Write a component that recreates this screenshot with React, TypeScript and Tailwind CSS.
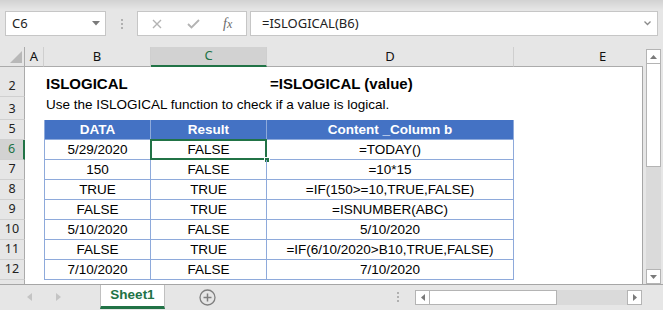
import React from "react";

const cellFont = "font-['Liberation_Sans',Arial,sans-serif] text-[13.5px] text-black";
const ui = "font-['Segoe_UI','Noto_Sans',sans-serif]";

const rows = [
  { n: 6, data: "5/29/2020", result: "FALSE", content: "=TODAY()" },
  { n: 7, data: "150", result: "FALSE", content: "=10*15" },
  { n: 8, data: "TRUE", result: "TRUE", content: "=IF(150>=10,TRUE,FALSE)" },
  { n: 9, data: "FALSE", result: "TRUE", content: "=ISNUMBER(ABC)" },
  { n: 10, data: "5/10/2020", result: "FALSE", content: "5/10/2020" },
  { n: 11, data: "FALSE", result: "TRUE", content: "=IF(6/10/2020>B10,TRUE,FALSE)" },
  { n: 12, data: "7/10/2020", result: "FALSE", content: "7/10/2020" },
];

function RowHead({ n, active, className }: { n?: number; active?: boolean; className: string }) {
  return (
    <div
      className={`${className} w-[25px] shrink-0 flex items-end justify-center pb-[3px] border-b border-[#d0d0d0] text-[12.5px] leading-[14px] ${ui} ${
        active
          ? "bg-[#d2d2d2] text-[#217346] border-r-2 border-r-[#217346]"
          : "bg-[#e6e6e6] text-[#222] border-r border-r-[#ababab]"
      }`}
    >
      {n}
    </div>
  );
}

function ColHead({ label, w, active }: { label: string; w: string; active?: boolean }) {
  return (
    <div
      className={`${w} shrink-0 h-full flex items-center justify-center text-[13px] ${ui} border-r border-[#cfcfcf] ${
        active ? "bg-[#d2d2d2] text-[#217346] border-b-2 border-b-[#217346]" : "text-[#111] border-b border-b-[#ababab]"
      }`}
    >
      {label}
    </div>
  );
}

export default function App() {
  return (
    <div className="w-[663px] h-[310px] overflow-hidden flex flex-col bg-[#e6e6e6]">
      {/* formula bar */}
      <div className="h-[47px] shrink-0 flex pt-[11px] pl-[5px] bg-[linear-gradient(#d2d2d2,#e6e6e6_10px)]">
        <div className="w-[101px] h-[25px] bg-white border border-[#c6c6c6] flex items-center justify-between pl-[6px] pr-[5px]">
          <span className={`${ui} text-[13px] text-[#222]`}>C6</span>
          <svg width="8" height="5" viewBox="0 0 8 5">
            <path d="M0 0H8L4 4.5Z" fill="#7a7a7a" />
          </svg>
        </div>
        <div className="w-[31px] h-[25px] flex flex-col items-center justify-center gap-[2px]">
          <div className="w-[2px] h-[2px] bg-[#b0b0b0]" />
          <div className="w-[2px] h-[2px] bg-[#b0b0b0]" />
          <div className="w-[2px] h-[2px] bg-[#b0b0b0]" />
        </div>
        <div className="w-[110px] h-[25px] bg-white border border-[#c6c6c6] flex items-center">
          <svg width="10" height="10" viewBox="0 0 10 10" className="ml-[14px]">
            <path d="M1 1L9 9M9 1L1 9" stroke="#b3b3b3" strokeWidth="1.4" />
          </svg>
          <svg width="13" height="10" viewBox="0 0 13 10" className="ml-[25px]">
            <path d="M1 5L4.5 8.5L12 1" stroke="#b3b3b3" strokeWidth="1.8" fill="none" />
          </svg>
          <span className="ml-[23px] font-['Liberation_Serif',serif] italic text-[14px] text-[#6a6a6a] leading-none">
            f<span className="text-[12px]">x</span>
          </span>
        </div>
        <div className="ml-[3px] w-[408px] h-[25px] bg-white border border-[#c6c6c6] flex items-center justify-between pl-[11px] pr-[6px]">
          <span className={`${ui} text-[13px] text-[#222]`}>=ISLOGICAL(B6)</span>
          <svg width="7" height="5" viewBox="0 0 7 5">
            <path d="M0.5 0.5L3.5 3.5L6.5 0.5" stroke="#8a8a8a" strokeWidth="1.3" fill="none" />
          </svg>
        </div>
      </div>

      {/* sheet */}
      <div className="flex flex-1 min-h-0">
        <div className="w-[643px] shrink-0 flex flex-col">
          {/* column headers */}
          <div className="h-[20px] shrink-0 flex">
            <div className="w-[25px] shrink-0 h-full flex items-end justify-end pr-[2px] pb-[3px] border-r border-b border-[#ababab]">
              <svg width="12" height="12" viewBox="0 0 12 12">
                <path d="M12 0V12H0Z" fill="#b8b8b8" />
              </svg>
            </div>
            <ColHead label="A" w="w-[19px]" />
            <ColHead label="B" w="w-[107px]" />
            <ColHead label="C" w="w-[116px]" active />
            <ColHead label="D" w="w-[247px]" />
            <div className="flex-1 h-full flex items-center pl-[85px] text-[13px] text-[#111] border-b border-[#ababab] font-['Segoe_UI','Noto_Sans',sans-serif]">
              E
            </div>
          </div>

          {/* rows */}
          <div className="flex-1 min-h-0 flex flex-col bg-white border-r border-[#a6a6a6]">
            <div className="h-[30px] flex">
              <RowHead n={2} className="h-[30px]" />
              <div className="w-[19px]" />
              <div className="w-[223px] flex items-end pb-[2px] pl-[2px] font-bold text-[15px] font-['Liberation_Sans',Arial,sans-serif]">
                ISLOGICAL
              </div>
              <div className="flex-1 flex items-end pb-[2px] pl-[3px] font-bold text-[15px] font-['Liberation_Sans',Arial,sans-serif]">
                =ISLOGICAL (value)
              </div>
            </div>
            <div className="h-[23px] flex">
              <RowHead n={3} className="h-[23px]" />
              <div className="w-[19px]" />
              <div className={`flex-1 flex items-end pb-[5px] pl-[2px] ${cellFont}`}>
                Use the ISLOGICAL function to check if a value is logical.
              </div>
            </div>

            {/* table header */}
            <div className="h-[20px] flex">
              <RowHead n={5} className="h-[20px]" />
              <div className="w-[19px]" />
              {["DATA", "Result", "Content _Column b"].map((t, i) => (
                <div
                  key={t}
                  className={`${["w-[107px] border-l", "w-[116px]", "w-[247px]"][i]} bg-[#4472c4] border-r border-b border-[#8eaadb] flex items-center justify-center pt-px font-bold text-white font-['Liberation_Sans',Arial,sans-serif] text-[13.5px]`}
                >
                  {t}
                </div>
              ))}
            </div>

            {rows.map((r) => (
              <div key={r.n} className="h-[20px] flex">
                <RowHead n={r.n} active={r.n === 6} className="h-[20px]" />
                <div className="w-[19px]" />
                <div className={`w-[107px] border-l border-r border-b border-[#8eaadb] flex items-center justify-center pt-px ${cellFont}`}>
                  {r.data}
                </div>
                <div className={`relative w-[116px] border-r border-b border-[#8eaadb] flex items-center justify-center pt-px ${cellFont}`}>
                  {r.result}
                  {r.n === 6 && (
                    <>
                      <div className="absolute left-[-1px] top-[-1px] right-[-1px] bottom-[-1px] border-2 border-[#217346]" />
                      <div className="absolute right-[-4px] bottom-[-4px] w-[6px] h-[6px] bg-[#217346] border border-white" />
                    </>
                  )}
                </div>
                <div className={`w-[247px] border-r border-b border-[#8eaadb] flex items-center justify-center pt-px ${cellFont}`}>
                  {r.content}
                </div>
              </div>
            ))}
            <div className="flex-1 flex">
              <div className="w-[25px] bg-[#e6e6e6] border-r border-[#ababab]" />
            </div>
          </div>
        </div>

        {/* vertical scrollbar */}
        <div className="flex-1 pl-[3px] pt-[2px]">
          <div className="w-[15px] h-full flex flex-col bg-[#dadada]">
            <div className="h-[15px] shrink-0 bg-white border border-[#b4b4b4] flex items-center justify-center">
              <svg width="7" height="4" viewBox="0 0 7 4">
                <path d="M0 4H7L3.5 0Z" fill="#7a7a7a" />
              </svg>
            </div>
            <div className="h-[103px] shrink-0 bg-white border border-[#b4b4b4] border-t-0" />
            <div className="flex-1" />
            <div className="h-[15px] shrink-0 bg-white border border-[#b4b4b4] flex items-center justify-center">
              <svg width="7" height="4" viewBox="0 0 7 4">
                <path d="M0 0H7L3.5 4Z" fill="#7a7a7a" />
              </svg>
            </div>
          </div>
        </div>
      </div>

      {/* sheet tabs */}
      <div className="h-[26px] shrink-0 flex items-start border-t border-[#a6a6a6]">
        <div className="w-[100px] h-[24px] flex items-center">
          <svg width="5" height="8" viewBox="0 0 5 8" className="ml-[27px]">
            <path d="M5 0V8L0 4Z" fill="#c4c4c4" />
          </svg>
          <svg width="5" height="8" viewBox="0 0 5 8" className="ml-[24px]">
            <path d="M0 0V8L5 4Z" fill="#c4c4c4" />
          </svg>
        </div>
        <div className="w-[65px] h-[24px] bg-white border-x border-[#c0c0c0] border-b-[3px] border-b-[#217346] flex items-center justify-center font-bold text-[13.5px] text-[#217346] font-['Liberation_Sans',Arial,sans-serif]">
          Sheet1
        </div>
        <div className="w-[84px] h-[24px] flex items-center justify-center">
          <svg width="17" height="17" viewBox="0 0 17 17">
            <circle cx="8.5" cy="8.5" r="7.5" fill="none" stroke="#7f7f7f" strokeWidth="1.3" />
            <path d="M8.5 4.5V12.5M4.5 8.5H12.5" stroke="#7f7f7f" strokeWidth="1.5" />
          </svg>
        </div>
        <div className="w-[151px] h-[24px] flex flex-col items-end justify-center gap-[2px] pr-[1px]">
          <div className="w-[2px] h-[2px] bg-[#b0b0b0]" />
          <div className="w-[2px] h-[2px] bg-[#b0b0b0]" />
          <div className="w-[2px] h-[2px] bg-[#b0b0b0]" />
        </div>
        <div className="ml-[15px] mt-[5px] w-[227px] h-[15px] flex bg-[#dadada]">
          <div className="w-[15px] bg-white border border-[#b4b4b4] flex items-center justify-center">
            <svg width="4" height="7" viewBox="0 0 4 7">
              <path d="M4 0V7L0 3.5Z" fill="#7a7a7a" />
            </svg>
          </div>
          <div className="w-[127px] bg-white border border-l-0 border-[#b4b4b4]" />
          <div className="flex-1" />
          <div className="w-[15px] bg-white border border-[#b4b4b4] flex items-center justify-center">
            <svg width="4" height="7" viewBox="0 0 4 7">
              <path d="M0 0V7L4 3.5Z" fill="#7a7a7a" />
            </svg>
          </div>
        </div>
      </div>
    </div>
  );
}
